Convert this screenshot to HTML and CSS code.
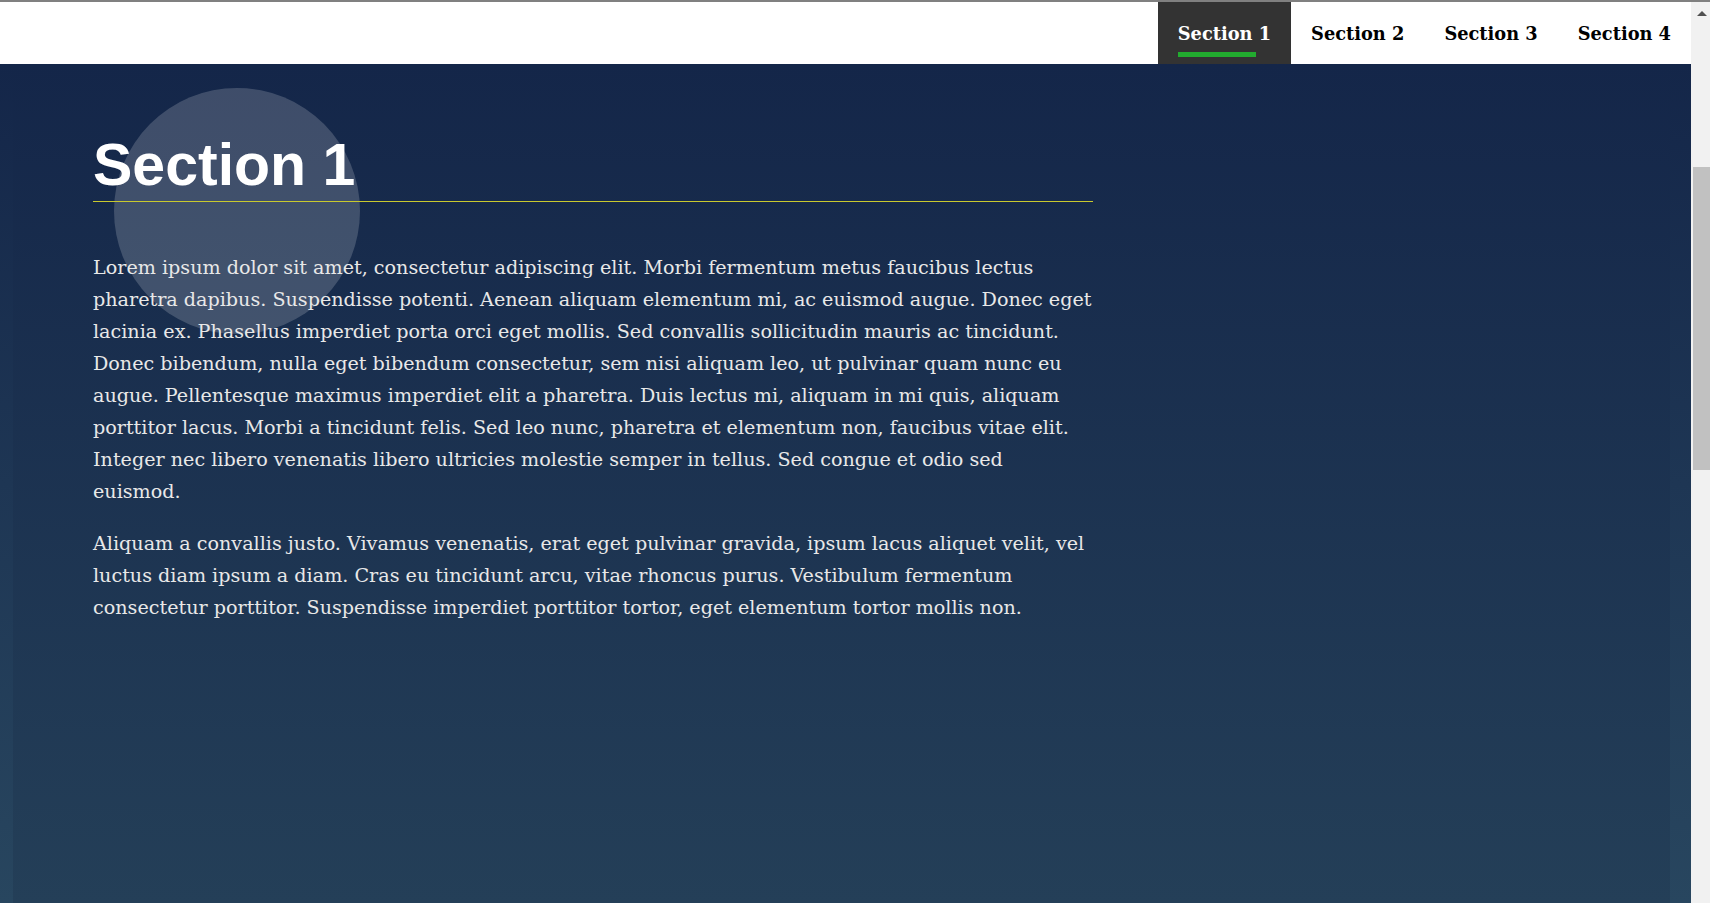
FILE: index.html
```html
<!DOCTYPE html>
<html lang="en">
<head>
<meta charset="utf-8">
<title>Sections</title>
<link rel="stylesheet" href="styles.css">
</head>
<body>
<div class="window">
  <div class="topline"></div>
  <div class="frame">
    <div class="page">
      <nav class="nav">
        <ul class="tabs">
          <li class="tab active"><span class="tab-label">Section 1</span><span class="tab-bar"></span></li>
          <li class="tab"><span class="tab-label">Section 2</span></li>
          <li class="tab"><span class="tab-label">Section 3</span></li>
          <li class="tab"><span class="tab-label">Section 4</span></li>
        </ul>
      </nav>
      <main class="main">
        <section class="section">
          <div class="blob"></div>
          <div class="content">
            <h1 class="title">Section 1</h1>
            <p class="text">Lorem ipsum dolor sit amet, consectetur adipiscing elit. Morbi fermentum metus faucibus lectus pharetra dapibus. Suspendisse potenti. Aenean aliquam elementum mi, ac euismod augue. Donec eget lacinia ex. Phasellus imperdiet porta orci eget mollis. Sed convallis sollicitudin mauris ac tincidunt. Donec bibendum, nulla eget bibendum consectetur, sem nisi aliquam leo, ut pulvinar quam nunc eu augue. Pellentesque maximus imperdiet elit a pharetra. Duis lectus mi, aliquam in mi quis, aliquam porttitor lacus. Morbi a tincidunt felis. Sed leo nunc, pharetra et elementum non, faucibus vitae elit. Integer nec libero venenatis libero ultricies molestie semper in tellus. Sed congue et odio sed euismod.</p>
            <p class="text">Aliquam a convallis justo. Vivamus venenatis, erat eget pulvinar gravida, ipsum lacus aliquet velit, vel luctus diam ipsum a diam. Cras eu tincidunt arcu, vitae rhoncus purus. Vestibulum fermentum consectetur porttitor. Suspendisse imperdiet porttitor tortor, eget elementum tortor mollis non.</p>
          </div>
        </section>
      </main>
    </div>
    <div class="scrollbar">
      <div class="scroll-arrow"></div>
      <div class="scroll-gap"></div>
      <div class="scroll-thumb"></div>
    </div>
  </div>
</div>
</body>
</html>
```

FILE: styles.css
```css
html, body {
  margin: 0;
  padding: 0;
  height: 100%;
  overflow: hidden;
}

.window {
  display: flex;
  flex-direction: column;
  height: 100vh;
}

.topline {
  height: 2px;
  background: #808080;
  flex: none;
}

.frame {
  flex: 1;
  display: flex;
  min-height: 0;
}

.page {
  flex: 1;
  display: flex;
  flex-direction: column;
  min-width: 0;
}

.nav {
  height: 62px;
  background: #ffffff;
  display: flex;
  justify-content: flex-end;
  flex: none;
}

.tabs {
  list-style: none;
  margin: 0;
  padding: 0;
  display: flex;
}

.tab {
  position: relative;
  display: flex;
  align-items: center;
  padding: 0 20px;
  height: 62px;
  font-family: "DejaVu Serif", "Liberation Serif", serif;
  font-weight: bold;
  font-size: 17.8px;
  color: #000000;
}

.tab.active {
  background: #333333;
  color: #ffffff;
}

.tab-bar {
  position: absolute;
  left: 20px;
  top: 50px;
  width: 78px;
  height: 5px;
  background: #22ab2f;
}

.main {
  flex: 1;
  display: flex;
  padding: 0 21px 0 13px;
  background: linear-gradient(to bottom, #142649 0%, #28465f 100%);
}

.section {
  position: relative;
  flex: 1;
  background: linear-gradient(to bottom, #142649 0%, #243f58 100%);
  padding: 68px 0 0 80px;
  overflow: hidden;
}

.blob {
  position: absolute;
  left: 101px;
  top: 24px;
  width: 246px;
  height: 246px;
  border-radius: 50%;
  background: rgba(255, 255, 255, 0.18);
}

.content {
  position: relative;
  width: 1000px;
}

.title {
  margin: 0;
  font-family: "Liberation Sans", Arial, sans-serif;
  font-weight: bold;
  font-size: 59px;
  line-height: 66px;
  color: #ffffff;
  padding-bottom: 3px;
  border-bottom: 1px solid #c9c92e;
}

.text {
  margin: 20px 0 0;
  font-family: "DejaVu Serif", "Liberation Serif", serif;
  font-size: 19.15px;
  line-height: 32px;
  color: #e8e8e8;
}

.title + .text {
  margin-top: 50px;
}

.scrollbar {
  width: 19px;
  flex: none;
  background: #f1f1f1;
  display: flex;
  flex-direction: column;
  align-items: flex-end;
}

.scroll-arrow {
  width: 0;
  height: 0;
  margin: 9px 3px 0 0;
  border-left: 5px solid transparent;
  border-right: 5px solid transparent;
  border-bottom: 5px solid #505050;
}

.scroll-gap {
  height: 151px;
}

.scroll-thumb {
  width: 17px;
  height: 303px;
  background: #c1c1c1;
}
```
